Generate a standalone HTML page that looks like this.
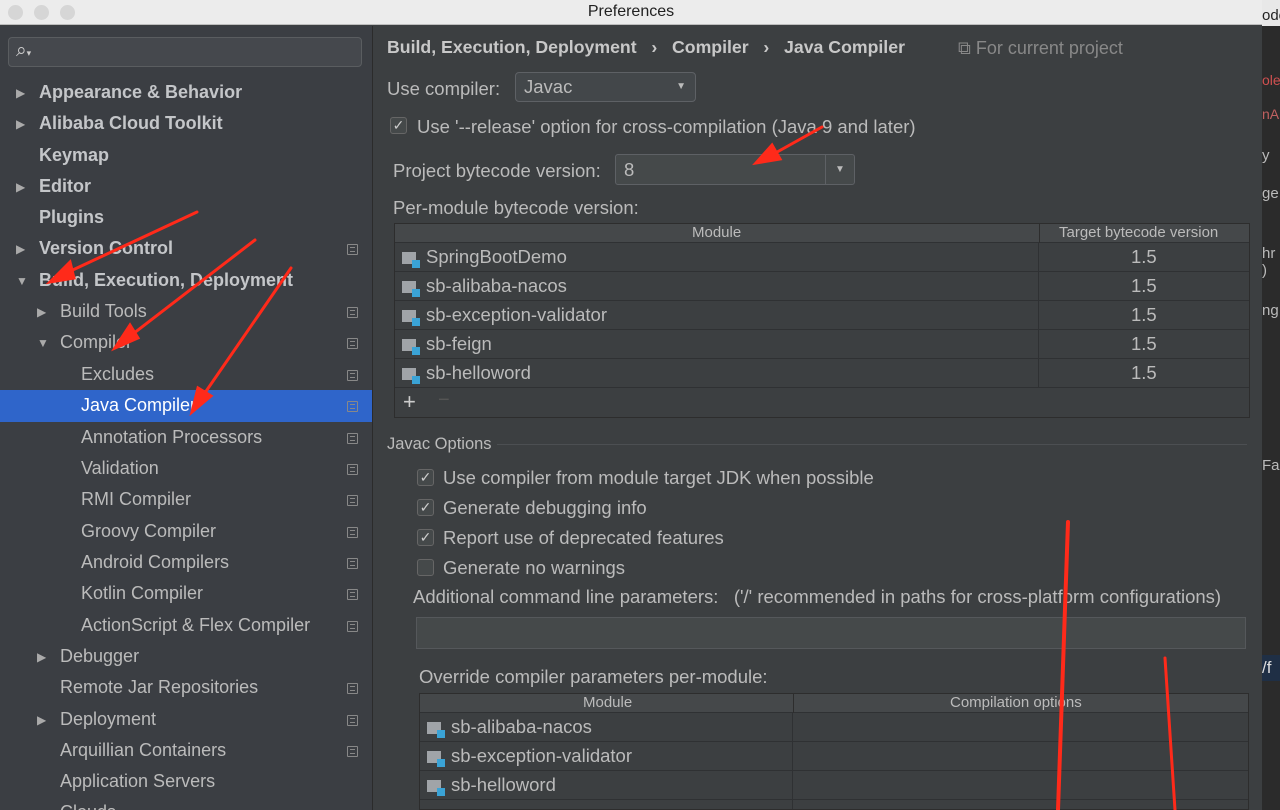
<!DOCTYPE html>
<html style="overflow:hidden;width:1280px;height:810px"><head><meta charset="utf-8"><style>
*{box-sizing:border-box;margin:0;padding:0}
body{width:1280px;height:810px;overflow:hidden;background:#3c3f41;font-family:"Liberation Sans",sans-serif;color:#bbbbbb;position:relative;font-size:18.5px}
.a{position:absolute;white-space:nowrap}
#title{left:0;top:0;width:1262px;height:25px;background:#ececec;border-bottom:1px solid #bdbdbd;color:#222;text-align:center;line-height:24px;font-size:16px}
.dot{position:absolute;top:5px;width:15px;height:15px;border-radius:50%;background:#d6d6d6}
#side{left:0;top:26px;width:372px;height:784px;background:#3b3e43}
#sep{left:372px;top:26px;width:1px;height:784px;background:#2b2b2b}
.it{position:absolute;height:31px;line-height:31px;white-space:nowrap;font-size:18px}
.b{font-weight:bold;color:#c4c6c9}
.tri{position:absolute;font-size:12px;color:#aaa}
.ic{position:absolute;left:347px;width:11px;height:11px;border:1px solid #888;border-radius:1px}
.ic:after{content:"";position:absolute;left:2px;top:2px;width:5px;height:3px;border-top:1px solid #888;border-bottom:1px solid #888}
.cb{position:absolute;width:17px;height:17px;border:1px solid #666;border-radius:3px;background:#45494a;color:#ccc;font-size:14px;line-height:15px;text-align:center}
.tbl{position:absolute;border:1px solid #2d2d2d;background:#3c3f41;overflow:hidden}
.row{position:absolute;left:0;right:0;height:29px;border-bottom:1px solid #2f3133;line-height:28px}
.fold{position:absolute;width:14px;height:12px;background:#a0a4a8;top:9px}
.fold:after{content:"";position:absolute;right:-4px;bottom:-4px;width:8px;height:8px;background:#3aa3d6}
.hd{font-size:15px}
</style></head><body>
<div class="a" id="title">Preferences<div class="dot" style="left:8px"></div><div class="dot" style="left:34px"></div><div class="dot" style="left:60px"></div></div>
<div class="a" style="left:1262px;top:0;width:18px;height:810px;background:#2b2b2b"></div>
<div class="a" style="left:1262px;top:0;width:18px;height:26px;background:#e8e8e8;color:#222;font-size:15px;line-height:32px">ode</div>
<div class="a" style="left:1262px;top:72px;font-size:14px;color:#d05050">ole</div>
<div class="a" style="left:1262px;top:106px;font-size:14px;color:#c06060">nA</div>
<div class="a" style="left:1262px;top:147px;font-size:15px">y</div>
<div class="a" style="left:1262px;top:185px;font-size:15px">ge</div>
<div class="a" style="left:1262px;top:245px;font-size:15px">hr<br>)</div>
<div class="a" style="left:1262px;top:302px;font-size:15px">ng</div>
<div class="a" style="left:1262px;top:457px;font-size:15px">Fal</div>
<div class="a" style="left:1262px;top:655px;width:18px;height:26px;background:#1f2f45;color:#ddd;font-size:17px;line-height:26px">/f</div>

<div class="a" id="side">
<div class="a" style="left:8px;top:11px;width:354px;height:30px;border:1px solid #5a5d60;border-radius:4px;background:#45484d"><span style="position:absolute;left:7px;top:2px;color:#ccc;font-size:19px">&#x2315;<span style="font-size:9px">▾</span></span></div>
</div>
<div class="a" id="sep"></div>
<div class="a" style="left:0;top:390px;width:372px;height:32px;background:#2f65ca"></div>

<div style="position:absolute;left:0;top:26px;width:372px;height:784px;overflow:hidden">
<div style="position:absolute;left:0;top:-26px;width:372px;height:840px">
<div class="tri" style="left:16px;top:86px">▶</div><div class="it b" style="left:39px;top:77px">Appearance &amp; Behavior</div>
<div class="tri" style="left:16px;top:117px">▶</div><div class="it b" style="left:39px;top:108px">Alibaba Cloud Toolkit</div>
<div class="it b" style="left:39px;top:140px">Keymap</div>
<div class="tri" style="left:16px;top:180px">▶</div><div class="it b" style="left:39px;top:171px">Editor</div>
<div class="it b" style="left:39px;top:202px">Plugins</div>
<div class="tri" style="left:16px;top:242px">▶</div><div class="it b" style="left:39px;top:233px">Version Control</div><div class="ic" style="top:244px"></div>
<div class="tri" style="left:16px;top:274px">▼</div><div class="it b" style="left:39px;top:265px">Build, Execution, Deployment</div>
<div class="tri" style="left:37px;top:305px">▶</div><div class="it" style="left:60px;top:296px">Build Tools</div><div class="ic" style="top:307px"></div>
<div class="tri" style="left:37px;top:336px">▼</div><div class="it" style="left:60px;top:327px">Compiler</div><div class="ic" style="top:338px"></div>
<div class="it" style="left:81px;top:359px">Excludes</div><div class="ic" style="top:370px"></div>
<div class="it" style="left:81px;top:390px;color:#fff">Java Compiler</div><div class="ic" style="top:401px"></div>
<div class="it" style="left:81px;top:422px">Annotation Processors</div><div class="ic" style="top:433px"></div>
<div class="it" style="left:81px;top:453px">Validation</div><div class="ic" style="top:464px"></div>
<div class="it" style="left:81px;top:484px">RMI Compiler</div><div class="ic" style="top:495px"></div>
<div class="it" style="left:81px;top:516px">Groovy Compiler</div><div class="ic" style="top:527px"></div>
<div class="it" style="left:81px;top:547px">Android Compilers</div><div class="ic" style="top:558px"></div>
<div class="it" style="left:81px;top:578px">Kotlin Compiler</div><div class="ic" style="top:589px"></div>
<div class="it" style="left:81px;top:610px">ActionScript &amp; Flex Compiler</div><div class="ic" style="top:621px"></div>
<div class="tri" style="left:37px;top:650px">▶</div><div class="it" style="left:60px;top:641px">Debugger</div>
<div class="it" style="left:60px;top:672px">Remote Jar Repositories</div><div class="ic" style="top:683px"></div>
<div class="tri" style="left:37px;top:713px">▶</div><div class="it" style="left:60px;top:704px">Deployment</div><div class="ic" style="top:715px"></div>
<div class="it" style="left:60px;top:735px">Arquillian Containers</div><div class="ic" style="top:746px"></div>
<div class="it" style="left:60px;top:766px">Application Servers</div>
<div class="it" style="left:60px;top:797px">Clouds</div>
</div></div>

<!-- main -->
<div class="a b" style="left:387px;top:37px;color:#c8c8c8;font-size:17.7px">Build, Execution, Deployment &nbsp;&nbsp;›&nbsp;&nbsp; Compiler &nbsp;&nbsp;›&nbsp;&nbsp; Java Compiler</div>
<div class="a" style="left:958px;top:38px;color:#888;font-size:18px">⧉ For current project</div>
<div class="a" style="left:387px;top:78px">Use compiler:</div>
<div class="a" style="left:515px;top:72px;width:181px;height:30px;border:1px solid #5e6165;border-radius:4px;background:#43474a;padding-left:8px;line-height:28px">Javac<span style="position:absolute;right:9px;font-size:10px">▼</span></div>
<div class="cb" style="left:390px;top:117px">✓</div><div class="a" style="left:417px;top:116px">Use '--release' option for cross-compilation (Java 9 and later)</div>
<div class="a" style="left:393px;top:160px">Project bytecode version:</div>
<div class="a" style="left:615px;top:154px;width:240px;height:31px;border:1px solid #5e6165;border-radius:3px;background:#45494a;padding-left:8px;line-height:29px">8<span style="position:absolute;right:0;top:0;width:29px;height:29px;border-left:1px solid #5e6165;text-align:center;font-size:10px">▼</span></div>
<div class="a" style="left:393px;top:197px">Per-module bytecode version:</div>
<div class="tbl" style="left:394px;top:223px;width:856px;height:195px">
 <div class="row hd" style="top:0;height:19px;background:#45484a;line-height:18px"><span style="position:absolute;left:297px">Module</span><span style="position:absolute;left:644px;width:1px;height:19px;background:#2d2d2d"></span><span style="position:absolute;left:664px">Target bytecode version</span></div>
 <div class="row" style="top:19px"><div class="fold" style="left:7px"></div><span style="position:absolute;left:31px">SpringBootDemo</span><span style="position:absolute;left:736px">1.5</span></div>
 <div class="row" style="top:48px"><div class="fold" style="left:7px"></div><span style="position:absolute;left:31px">sb-alibaba-nacos</span><span style="position:absolute;left:736px">1.5</span></div>
 <div class="row" style="top:77px"><div class="fold" style="left:7px"></div><span style="position:absolute;left:31px">sb-exception-validator</span><span style="position:absolute;left:736px">1.5</span></div>
 <div class="row" style="top:106px"><div class="fold" style="left:7px"></div><span style="position:absolute;left:31px">sb-feign</span><span style="position:absolute;left:736px">1.5</span></div>
 <div class="row" style="top:135px"><div class="fold" style="left:7px"></div><span style="position:absolute;left:31px">sb-helloword</span><span style="position:absolute;left:736px">1.5</span></div>
 <div style="position:absolute;left:643px;top:19px;width:1px;height:145px;background:#2f3133"></div>
 <div class="a" style="left:8px;top:165px;font-size:22px;color:#ccc">+</div><div class="a" style="left:43px;top:165px;font-size:20px;color:#555">−</div>
</div>
<div class="a" style="left:387px;top:435px;font-size:16.5px">Javac Options</div>
<div class="a" style="left:497px;top:444px;width:750px;height:1px;background:#4c4f52"></div>
<div class="cb" style="left:417px;top:469px">✓</div><div class="a" style="left:443px;top:467px">Use compiler from module target JDK when possible</div>
<div class="cb" style="left:417px;top:499px">✓</div><div class="a" style="left:443px;top:497px">Generate debugging info</div>
<div class="cb" style="left:417px;top:529px">✓</div><div class="a" style="left:443px;top:527px">Report use of deprecated features</div>
<div class="cb" style="left:417px;top:559px"></div><div class="a" style="left:443px;top:557px">Generate no warnings</div>
<div class="a" style="left:413px;top:586px">Additional command line parameters: &nbsp;&nbsp;('/' recommended in paths for cross-platform configurations)</div>
<div class="a" style="left:416px;top:617px;width:830px;height:32px;border:1px solid #55585b;background:#45494a"></div>
<div class="a" style="left:419px;top:666px">Override compiler parameters per-module:</div>
<div class="tbl" style="left:419px;top:693px;width:830px;height:117px">
 <div class="row hd" style="top:0;height:19px;background:#45484a;line-height:18px"><span style="position:absolute;left:163px">Module</span><span style="position:absolute;left:373px;width:1px;height:19px;background:#2d2d2d"></span><span style="position:absolute;left:530px">Compilation options</span></div>
 <div class="row" style="top:19px"><div class="fold" style="left:7px"></div><span style="position:absolute;left:31px">sb-alibaba-nacos</span></div>
 <div class="row" style="top:48px"><div class="fold" style="left:7px"></div><span style="position:absolute;left:31px">sb-exception-validator</span></div>
 <div class="row" style="top:77px"><div class="fold" style="left:7px"></div><span style="position:absolute;left:31px">sb-helloword</span></div>
 <div style="position:absolute;left:372px;top:19px;width:1px;height:100px;background:#2f3133"></div>
</div>
<svg class="a" style="left:0;top:0" width="1280" height="810">
<g fill="#ff2a1a" stroke="#ff2a1a" stroke-width="3" stroke-linecap="round">
<line x1="197" y1="212" x2="62" y2="275"/><polygon points="50,282 70,262 74,278"/>
<line x1="255" y1="240" x2="125" y2="340"/><polygon points="115,348 130,325 138,338"/>
<line x1="291" y1="268" x2="200" y2="400"/><polygon points="192,412 198,388 211,396"/>
<line x1="822" y1="127" x2="770" y2="156"/><polygon points="756,163 772,145 780,159"/>
<line x1="1068" y1="522" x2="1058" y2="810" stroke-width="4"/>
<line x1="1165" y1="658" x2="1175" y2="810" stroke-width="3"/>
</g></svg>
</body></html>
